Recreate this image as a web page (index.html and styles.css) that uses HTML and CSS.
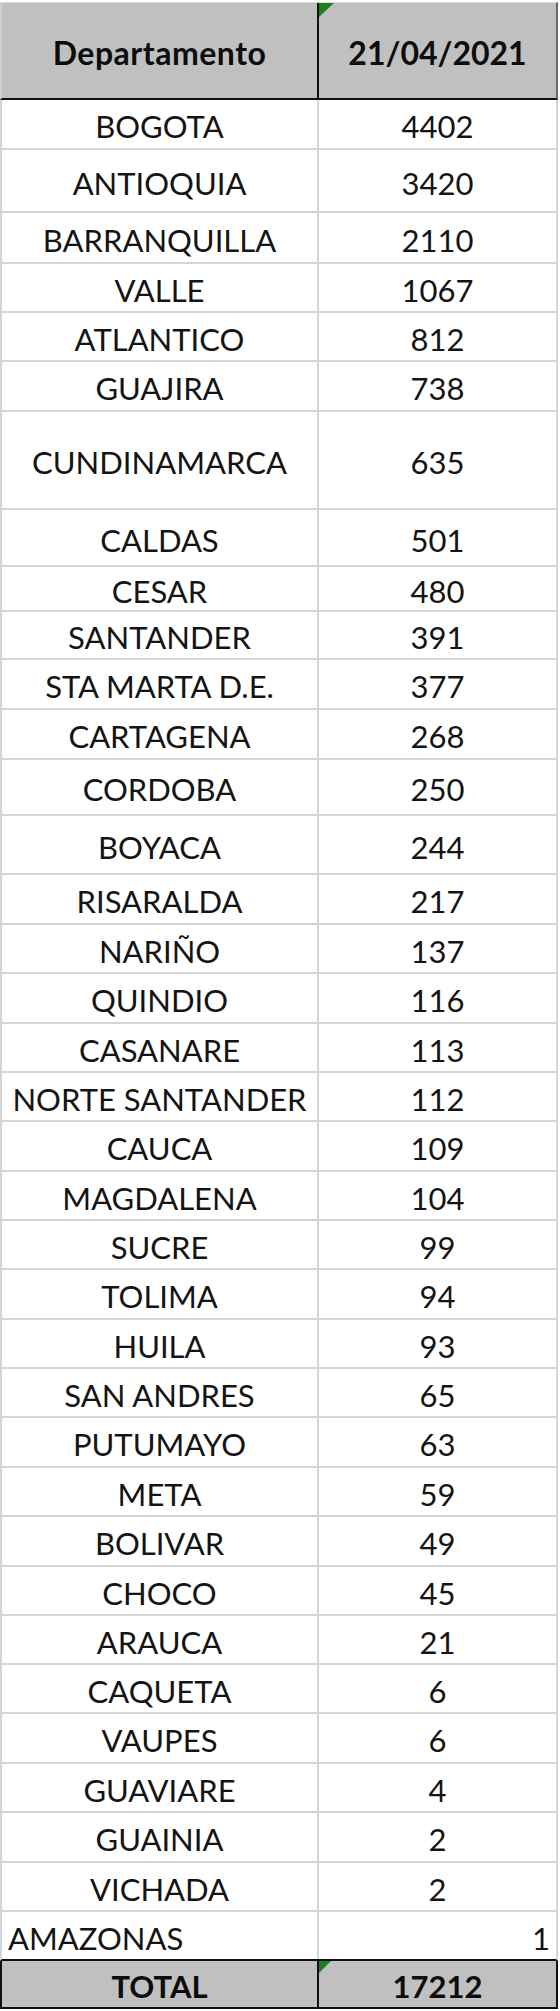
FILE: index.html
```html
<!DOCTYPE html>
<html lang="es">
<head>
<meta charset="utf-8">
<title>Departamento 21/04/2021</title>
<link rel="stylesheet" href="styles.css">
</head>
<body>
<div class="sheet">
  <div class="row head h98"><div class="c name">Departamento</div><div class="c num flag">21/04/2021</div></div>
  <div class="row h50"><div class="c name">BOGOTA</div><div class="c num">4402</div></div>
  <div class="row h63"><div class="c name">ANTIOQUIA</div><div class="c num">3420</div></div>
  <div class="row h51"><div class="c name">BARRANQUILLA</div><div class="c num">2110</div></div>
  <div class="row h49"><div class="c name">VALLE</div><div class="c num">1067</div></div>
  <div class="row h49"><div class="c name">ATLANTICO</div><div class="c num">812</div></div>
  <div class="row h50"><div class="c name">GUAJIRA</div><div class="c num">738</div></div>
  <div class="row h98"><div class="c name">CUNDINAMARCA</div><div class="c num">635</div></div>
  <div class="row h57"><div class="c name">CALDAS</div><div class="c num">501</div></div>
  <div class="row h45"><div class="c name">CESAR</div><div class="c num">480</div></div>
  <div class="row h48"><div class="c name">SANTANDER</div><div class="c num">391</div></div>
  <div class="row h50"><div class="c name">STA MARTA D.E.</div><div class="c num">377</div></div>
  <div class="row h50"><div class="c name">CARTAGENA</div><div class="c num">268</div></div>
  <div class="row h56"><div class="c name">CORDOBA</div><div class="c num">250</div></div>
  <div class="row h59"><div class="c name">BOYACA</div><div class="c num">244</div></div>
  <div class="row h50"><div class="c name">RISARALDA</div><div class="c num">217</div></div>
  <div class="row h49"><div class="c name">NARIÑO</div><div class="c num">137</div></div>
  <div class="row h50"><div class="c name">QUINDIO</div><div class="c num">116</div></div>
  <div class="row h49"><div class="c name">CASANARE</div><div class="c num">113</div></div>
  <div class="row h49"><div class="c name">NORTE SANTANDER</div><div class="c num">112</div></div>
  <div class="row h50"><div class="c name">CAUCA</div><div class="c num">109</div></div>
  <div class="row h49"><div class="c name">MAGDALENA</div><div class="c num">104</div></div>
  <div class="row h49"><div class="c name">SUCRE</div><div class="c num">99</div></div>
  <div class="row h50"><div class="c name">TOLIMA</div><div class="c num">94</div></div>
  <div class="row h49"><div class="c name">HUILA</div><div class="c num">93</div></div>
  <div class="row h49"><div class="c name">SAN ANDRES</div><div class="c num">65</div></div>
  <div class="row h50"><div class="c name">PUTUMAYO</div><div class="c num">63</div></div>
  <div class="row h49"><div class="c name">META</div><div class="c num">59</div></div>
  <div class="row h50"><div class="c name">BOLIVAR</div><div class="c num">49</div></div>
  <div class="row h49"><div class="c name">CHOCO</div><div class="c num">45</div></div>
  <div class="row h49"><div class="c name">ARAUCA</div><div class="c num">21</div></div>
  <div class="row h49"><div class="c name">CAQUETA</div><div class="c num">6</div></div>
  <div class="row h50"><div class="c name">VAUPES</div><div class="c num">6</div></div>
  <div class="row h49"><div class="c name">GUAVIARE</div><div class="c num">4</div></div>
  <div class="row h50"><div class="c name">GUAINIA</div><div class="c num">2</div></div>
  <div class="row h49"><div class="c name">VICHADA</div><div class="c num">2</div></div>
  <div class="row h49 last"><div class="c name left">AMAZONAS</div><div class="c num right">1</div></div>
  <div class="row total h48"><div class="c name">TOTAL</div><div class="c num flag small">17212</div></div>
</div>
</body>
</html>
```

FILE: styles.css
```css
html, body {
  margin: 0;
  padding: 0;
  background: #ffffff;
}

.sheet {
  width: 558px;
  padding-top: 2px;
  font-family: "Lato", "Open Sans", sans-serif;
  font-size: 31px;
  color: #141414;
}

.row {
  box-sizing: border-box;
  display: grid;
  grid-template-columns: 317px 237px;
  border-left: 2px solid #d5d5d5;
  border-right: 2px solid #d5d5d5;
  border-bottom: 2px solid #d5d5d5;
}

.c {
  box-sizing: border-box;
  display: flex;
  align-items: center;
  justify-content: center;
  padding-top: 4px;
  white-space: nowrap;
}

.name {
  border-right: 2px solid #d5d5d5;
}

.left {
  justify-content: flex-start;
  padding-left: 6px;
}

.right {
  justify-content: flex-end;
  padding-right: 6px;
}

.head {
  background: #c0c0c0;
  border-top: 1px solid #d8d8d8;
  border-left-color: #d0d0d0;
  border-right-color: #6a6a6a;
  border-bottom-color: #111111;
  font-weight: 700;
  font-size: 32px;
  color: #0d0d0d;
}

.head .name {
  letter-spacing: 0.5px;
}

.head .name,
.total .name {
  border-right-color: #111111;
}

.last {
  border-bottom-color: #111111;
}

.total {
  background: #c0c0c0;
  border-left-color: #111111;
  border-right-color: #111111;
  border-bottom-color: #111111;
  font-weight: 700;
  color: #0d0d0d;
}

.flag {
  position: relative;
}

.flag::before {
  content: "";
  position: absolute;
  left: 0;
  top: 0;
  width: 0;
  height: 0;
  border-top: 14px solid #1f7d22;
  border-right: 15px solid transparent;
}

.flag.small::before {
  border-top-width: 12px;
  border-right-width: 12px;
}

.h45 { height: 45px; }
.h48 { height: 48px; }
.h49 { height: 49px; }
.h50 { height: 50px; }
.h51 { height: 51px; }
.h56 { height: 56px; }
.h57 { height: 57px; }
.h59 { height: 59px; }
.h63 { height: 63px; }
.h98 { height: 98px; }
```
